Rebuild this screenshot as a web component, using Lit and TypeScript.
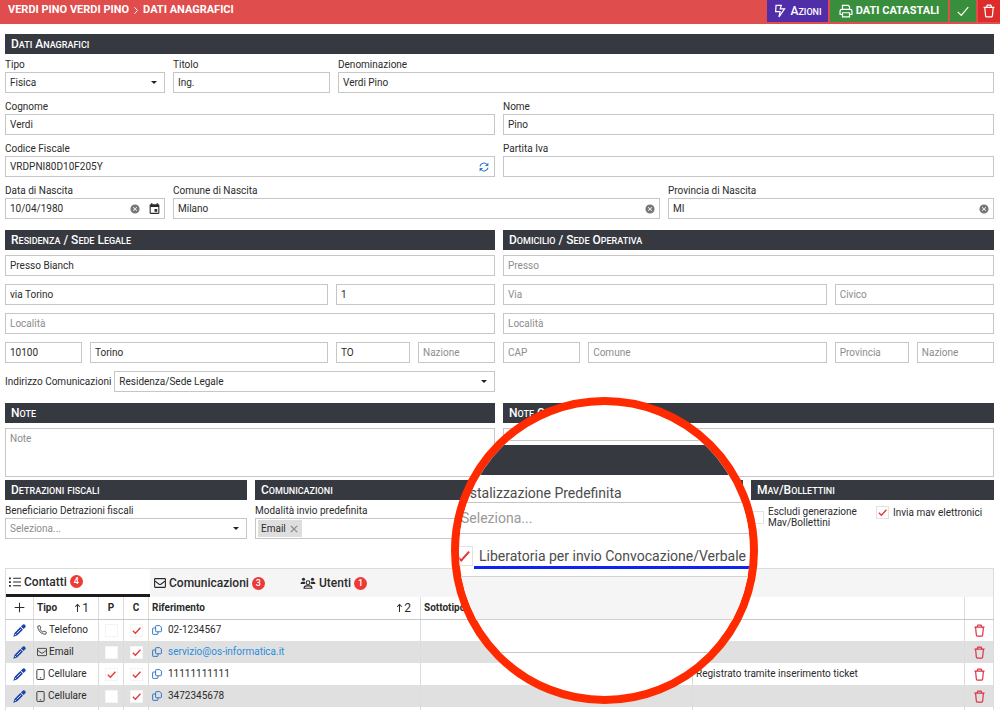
import { LitElement, html, css, svg, nothing, TemplateResult, SVGTemplateResult } from "lit";
import { customElement } from "lit/decorators.js";

type Contact = {
  icon: string;
  kind: string;
  preferred: boolean;
  comm: boolean;
  ref: string;
  link?: boolean;
  note?: string;
};

const CONTACTS: Contact[] = [
  { icon: "phone", kind: "Telefono", preferred: false, comm: true, ref: "02-1234567" },
  { icon: "mail", kind: "Email", preferred: false, comm: true, ref: "servizio@os-informatica.it", link: true },
  { icon: "mobile", kind: "Cellulare", preferred: true, comm: true, ref: "11111111111", note: "Registrato tramite inserimento ticket" },
  { icon: "mobile", kind: "Cellulare", preferred: false, comm: true, ref: "3472345678" },
];

/* Stroked glyphs on a 16 by 16 grid. */
const GLYPHS: Record<string, SVGTemplateResult> = {
  bolt: svg`<path d="M3.5 1.5h6L8.3 5.5h4.9L6.8 14.8l1.3-6H3z"/>`,
  print: svg`<path d="M4 6V1.5h6.5L12 3v3M3.5 12H1.2V8.3Q1.2 6.2 3.2 6.2h9.6q2 0 2 2.1V12h-2.3M4 10h8v4.8H4z"/>`,
  check: svg`<path d="M2 9l4 4L14 3.5"/>`,
  trash: svg`<path d="M1.8 3.8h12.4M5 3.6L6 1.3h4l1 2.3M3.2 4l.9 9.6q.1 1.2 1.2 1.2h5.4q1.1 0 1.2-1.2L12.8 4"/>`,
  chevron: svg`<path d="M5 1.5l6 6.5-6 6.5"/>`,
  refresh: svg`<path d="M1.5 7A6.6 6.6 0 0 1 13 4M14.5 9A6.6 6.6 0 0 1 3 12"/><path class="solid" d="M15 1v5.5H9.5zM1 15V9.500h5.500z"/>`,
  list: svg`<path d="M5.500 3H16M5.500 8H16M5.500 13H16"/><path class="solid" d="M0 2h2.500v2.200H0zM0 7h2.500v2.200H0zM0 12h2.500v2.200H0z"/>`,
  mail: svg`<path d="M1.6 2.200h12.800q.8 0 .8.800v10q0 .8-.8.8H1.600q-.8 0-.8-.8V3q0-.8.8-.8zM1 5.200l5.400 4.200q1.600 1.100 3.200 0L15 5.200"/>`,
  phone: svg`<path d="M4.500 1L1.200 2C1.200 9.200 6.800 14.800 14 14.800l1-3.300-3.800-1.800-1.600 1.900C7.500 10.500 5.500 8.500 4.400 6.400l1.900-1.600z"/>`,
  mobile: svg`<path d="M4 .8h8q1.300 0 1.300 1.300v11.800q0 1.300-1.300 1.300H4q-1.300 0-1.300-1.300V2.100Q2.700.8 4 .8z"/><path d="M7 12.800h2"/>`,
  pencil: svg`<path class="solid" d="M12.300.6q1-.8 2 .1l1 1q.9 1 .1 2L13 6.200 9.800 3zM9 3.800L12.200 7 5 14.200.4 15.600 1.800 11z"/><path class="cut" d="M4.500 11.500l5.200-5.200M2.300 12.200l1.500 1.500"/>`,
  copy: svg`<path d="M6.800 1h5.700L15 3.500v6.300q0 1-1 1H6.800q-1 0-1-1V2q0-1 1-1zM5.500 4.800H2q-1 0-1 1V14q0 1 1 1h6.500q1 0 1-1v-2.800"/>`,
  plus: svg`<path d="M8 1v14M1 8h14"/>`,
  close: svg`<path d="M3 3l10 10M13 3L3 13"/>`,
  up: svg`<path d="M8 15V2M4 5.800L8 1.800l4 4"/>`,
  users: svg`<circle cx="8" cy="7.500" r="2.500"/><path d="M2.800 15q0-3.200 3-3.200h4.400q3 0 3 3.200z"/><circle class="solid" cx="2" cy="3" r="2.100"/><circle class="solid" cx="14" cy="3" r="2.100"/><path class="solid" d="M-2 9.200q0-3 2.800-3h3.200L3.800 9.200zM18 9.200q0-3-2.800-3H12l.2 3z"/>`,
};

const icon = (name: string, extra = "") =>
  html`<svg class="icon ${extra}" viewBox="0 0 16 16" aria-hidden="true">${GLYPHS[name]}</svg>`;

const clearIcon = html`<svg class="clear" viewBox="0 0 24 24" aria-hidden="true"><path d="M12 1a11 11 0 1 0 0 22 11 11 0 0 0 0-22zm5 14.600L15.600 17 12 13.400 8.400 17 7 15.600l3.600-3.600L7 8.400 8.400 7l3.600 3.600L15.600 7 17 8.400 13.400 12z"/></svg>`;
const calendarIcon = html`<svg class="calendar" viewBox="0 0 24 24" aria-hidden="true"><path d="M19 4h-1V2h-2v2H8V2H6v2H5c-1.100 0-2 .9-2 2v14c0 1.100.9 2 2 2h14c1.100 0 2-.9 2-2V6c0-1.100-.9-2-2-2zm0 16H5V9h14v11zM12 13h5v5h-5z"/></svg>`;
const caret = html`<svg class="caret" viewBox="0 0 8 4" aria-hidden="true"><path d="M0 0h8L4 4z"/></svg>`;

/* Small capitals: every word is set small, its capital initial large. */
const caps = (text: string) =>
  text.split(/(\/|\s+)/).map((w) =>
    /^[A-Za-z]/.test(w) ? html`<span class="word ${/^[A-Z]/.test(w) ? "initial" : ""}">${w}</span>` : w
  );

@customElement("app-root")
export class AppRoot extends LitElement {
  static styles = css`
    :host {
      display: block;
      position: relative;
      font: 10px/12px Roboto, "Liberation Sans", sans-serif;
      color: #2b2b2b;
      background: #fff;
    }
    * { box-sizing: border-box; }
    input, select, textarea, button { font: inherit; color: inherit; margin: 0; }
    button { border: 0; padding: 0; background: none; }
    .icon { width: 11px; height: 11px; fill: none; stroke: currentColor; stroke-width: 1.5; flex: none; overflow: visible; }
    .solid { fill: currentColor; stroke: none; }
    .cut { stroke: #fff; stroke-width: 1; }
    .word { display: inline-block; font-size: 9px; text-transform: uppercase; }
    .initial::first-letter { font-size: 12px; }

    .top { display: flex; align-items: flex-start; height: 24px; background: #df4d4c; color: #fff; }
    .crumbs { flex: 1; display: flex; align-items: center; gap: 3px; height: 20px; margin: 0; padding-left: 8px; font-size: 11px; font-weight: 700; text-transform: uppercase; }
    .crumbs .icon { width: 8px; height: 11px; stroke-width: 2; }
    .actions { display: flex; gap: 2px; }
    .act { display: flex; align-items: center; justify-content: center; gap: 3px; height: 22px; font-size: 12px; font-weight: 500; }
    .act .icon { width: 14px; height: 14px; stroke-width: 1.4; }
    .act.violet { width: 61px; background: #512da8; }
    .act.green { background: #388e3c; }
    .act.wide { width: 118px; font-size: 11px; font-weight: 700; }
    .act.tick { width: 26px; }
    .act.red { width: 22px; background: #dd2c2c; }

    main { padding: 10px 6px 0 5px; }
    h2 { height: 20px; margin: 0; padding-left: 6px; background: #373941; color: #fff; font-size: 12px; line-height: 20px; font-weight: 500; white-space: nowrap; overflow: hidden; }
    .labelled { display: grid; gap: 4px; padding-top: 1px; }
    .row { display: grid; gap: 8px; }
    .halves { grid-template-columns: minmax(0, 490fr) minmax(0, 491fr); }
    .r-top { grid-template-columns: 160fr 157fr 656fr; }
    .r-birth { grid-template-columns: 160fr 487fr 326fr; }
    .r-street { grid-template-columns: 323fr 159fr; }
    .r-city { grid-template-columns: 77fr 238fr 74fr 77fr; }
    .r-bottom { grid-template-columns: 242fr 488fr 243fr; margin-top: 3px; }
    .inline { display: flex; align-items: center; gap: 3px; }
    .inline .box { flex: 1; }
    .part { margin-top: 11px; }
    .notes { margin-top: 11px; }

    .field { min-width: 0; }
    .field > label { display: block; height: 17px; line-height: 19px; white-space: nowrap; }
    .box { display: flex; align-items: center; min-width: 0; height: 21px; border: 1px solid #c6c6c6; background: #fff; }
    .box input, .box select { flex: 1; width: 100%; min-width: 0; height: 19px; padding: 0 4px; border: 0; outline: 0; background: none; appearance: none; }
    .box > svg { flex: none; }
    .box .hint, ::placeholder { color: #8d8d8d; opacity: 1; }
    .caret { width: 6px; height: 3px; margin-right: 7px; fill: #222; }
    .clear { width: 10px; height: 10px; margin-right: 4px; fill: #777; }
    .calendar { width: 13px; height: 13px; margin: 0 3px 0 4px; fill: #2b2b2b; }
    .box .refresh { width: 10px; height: 10px; margin-right: 5px; color: #2a7ac8; stroke-width: 1.8; }
    textarea { display: block; width: 100%; height: 49px; margin-top: 5px; padding: 4px; border: 1px solid #c6c6c6; resize: none; outline: 0; }
    .stack { display: grid; gap: 8px; padding-top: 5px; }
    .tag { display: flex; align-items: center; gap: 3px; height: 17px; margin-left: 2px; padding: 0 3px; background: #dedede; }
    .tag button { display: flex; }
    .tag .icon { width: 10px; height: 10px; color: #888; stroke-width: 2; }

    .tickbox { flex: none; appearance: none; width: 13px; height: 13px; margin: 0; border: 1px solid #e2e2e2; background: #fff center / 9px 9px no-repeat; }
    .tickbox:checked { background-image: url("data:image/svg+xml,%3Csvg xmlns='http://www.w3.org/2000/svg' viewBox='0 0 16 16'%3E%3Cpath d='M1.500 8.500l4.500 4.500L15 3' fill='none' stroke='%23e53935' stroke-width='2.400'/%3E%3C/svg%3E"); }
    .ticks { display: grid; grid-template-columns: 125fr 118fr; align-items: start; padding-top: 6px; line-height: 11px; }
    .ticks label { display: flex; align-items: center; gap: 4px; }

    .tabs { display: flex; height: 29px; margin-top: 29px; border: 1px solid #dcdcdc; border-bottom: 0; background: #f5f5f5; }
    .tab { display: flex; align-items: center; gap: 3px; width: 146px; padding: 0 4px; font-size: 12px; font-weight: 500; }
    .tab.active { width: 144px; padding: 0 3px; border-bottom: 3px solid #1c1c1c; background: #fff; }
    .tab .icon { width: 12px; height: 12px; }
    .tab .users { margin: 0 2px; }
    .badge { min-width: 13px; height: 13px; border-radius: 7px; background: #ee3a36; color: #fff; font-size: 9px; line-height: 13px; text-align: center; }

    table { width: 100%; table-layout: fixed; border-collapse: collapse; }
    th, td { height: 22px; padding: 0 3px; text-align: left; border-left: 1px solid #dcdcdc; border-right: 1px solid #dcdcdc; white-space: nowrap; }
    th { border-bottom: 1px solid #c8c8c8; font-weight: 700; }
    .c-icon { width: 28px; }
    .c-kind { width: 65px; }
    .c-flag { width: 25px; }
    .c-del { width: 29px; }
    tbody tr.even { background: #e0e0e0; }
    tfoot td { height: 3px; }
    .center { text-align: center; padding: 0; }
    .cell { display: flex; align-items: center; gap: 2px; }
    .ref { gap: 6px; }
    .between { justify-content: space-between; }
    .center .cell { justify-content: center; }
    .cell button { display: flex; }
    .sort { display: flex; align-items: center; font-size: 12px; font-weight: 400; padding-right: 6px; }
    .sort .icon { width: 9px; height: 10px; stroke-width: 1.800; }
    .cell .copy { width: 10px; height: 10px; color: #2a70c0; }
    .cell .pencil { width: 13px; height: 13px; color: #1a44a8; }
    .cell .bin { width: 13px; height: 13px; color: #dc3545; }
    .cell .kind { width: 10px; height: 10px; stroke-width: 1.300; }
    .cell .mobile { width: 11px; height: 11px; margin: 0 -2px; }
    .cell .mobile + span { padding-left: 2px; }
    td .tickbox { border-color: #f4f4f4; }
    a { color: #2b8ddb; text-decoration: none; }

    /* Magnifier floating over the form */
    .lens { position: absolute; left: 451px; top: 397px; width: 307px; height: 307px; border: 8px solid #ff2a00; border-radius: 50%; overflow: hidden; background: #fff; color: #4c4c4c; font-size: 14px; line-height: 18px; }
    .zoomed { margin: 0 -6px; }
    .z-area { height: 36px; border-bottom: 1px solid #c6c6c6; }
    .z-bar { height: 30px; margin-top: 4px; background: #373941; }
    .z-label { display: block; height: 27px; padding-top: 9px; white-space: nowrap; }
    .z-select { display: flex; width: 100%; height: 32px; padding: 0 7px; appearance: none; border: 1px solid #c6c6c6; background: #fff; color: #999; opacity: 1; }
    .z-check { display: flex; align-items: center; gap: 1px; height: 20px; margin-top: 12px; white-space: nowrap; }
    .z-check .tickbox { width: 20px; height: 20px; background-size: 14px 14px; }
    .z-text { height: 23px; margin-top: 3px; padding: 0 4px 0 5px; border-bottom: 3px solid #1024f0; line-height: 21px; }
    .z-tabs { height: 44px; margin-top: 10px; border: solid #d2d2d2; border-width: 1px 0; background: #f5f5f5; }
    .z-head { height: 33px; border-bottom: 1px solid #c6c6c6; }
  `;

  private box(id: string, name: string, value: string, after: unknown = nothing) {
    return html`<div class="box"><input id=${id} type="text" aria-label=${name} placeholder=${value ? "" : name} .value=${value} />${after}</div>`;
  }

  private field(id: string, label: string, value: string, after: unknown = nothing) {
    return html`<div class="field"><label for=${id}>${label}</label>
      <div class="box"><input id=${id} type="text" .value=${value} />${after}</div></div>`;
  }

  private select(id: string, value: string, hint = false) {
    return html`<div class="box"><select id=${id} class=${hint ? "hint" : ""}><option>${value}</option></select>${caret}</div>`;
  }

  private address(prefix: string, v: string[]): TemplateResult {
    return html`
      ${this.box(prefix + "-presso", "Presso", v[0])}
      <div class="row r-street">${this.box(prefix + "-via", "Via", v[1])}${this.box(prefix + "-civico", "Civico", v[2])}</div>
      ${this.box(prefix + "-localita", "Località", "")}
      <div class="row r-city">
        ${this.box(prefix + "-cap", "CAP", v[3])}${this.box(prefix + "-comune", "Comune", v[4])}
        ${this.box(prefix + "-provincia", "Provincia", v[5])}${this.box(prefix + "-nazione", "Nazione", "")}
      </div>`;
  }

  private contactRow(c: Contact, i: number) {
    return html`<tr class=${i % 2 ? "even" : ""}>
      <td class="center"><div class="cell"><button aria-label="Modifica">${icon("pencil", "pencil")}</button></div></td>
      <td><div class="cell">${icon(c.icon, "kind " + c.icon)}<span>${c.kind}</span></div></td>
      <td class="center"><div class="cell"><input class="tickbox" type="checkbox" aria-label="P" .checked=${c.preferred} /></div></td>
      <td class="center"><div class="cell"><input class="tickbox" type="checkbox" aria-label="C" .checked=${c.comm} /></div></td>
      <td><div class="cell ref"><button aria-label="Copia">${icon("copy", "copy")}</button>${c.link ? html`<a href="mailto:${c.ref}">${c.ref}</a>` : html`<span>${c.ref}</span>`}</div></td>
      <td></td>
      <td>${c.note ?? nothing}</td>
      <td class="center"><div class="cell"><button aria-label="Elimina">${icon("trash", "bin")}</button></div></td>
    </tr>`;
  }

  render() {
    return html`
      <header class="top">
        <h1 class="crumbs"><span>Verdi Pino Verdi Pino</span>${icon("chevron")}<span>Dati Anagrafici</span></h1>
        <div class="actions">
          <button class="act violet">${icon("bolt")}<span>${caps("Azioni")}</span></button>
          <button class="act green wide">${icon("print")}<span>DATI CATASTALI</span></button>
          <button class="act green tick" aria-label="Conferma">${icon("check")}</button>
          <button class="act red" aria-label="Elimina">${icon("trash")}</button>
        </div>
      </header>
      <main>
        <section>
          <h2>${caps("Dati Anagrafici")}</h2>
          <div class="labelled">
            <div class="row r-top">
              <div class="field"><label for="tipo">Tipo</label>${this.select("tipo", "Fisica")}</div>
              ${this.field("titolo", "Titolo", "Ing.")}
              ${this.field("denominazione", "Denominazione", "Verdi Pino")}
            </div>
            <div class="row halves">${this.field("cognome", "Cognome", "Verdi")}${this.field("nome", "Nome", "Pino")}</div>
            <div class="row halves">
              ${this.field("cf", "Codice Fiscale", "VRDPNI80D10F205Y", icon("refresh", "refresh"))}
              ${this.field("piva", "Partita Iva", "")}
            </div>
            <div class="row r-birth">
              ${this.field("nascita", "Data di Nascita", "10/04/1980", html`${clearIcon}${calendarIcon}`)}
              ${this.field("comune-n", "Comune di Nascita", "Milano", clearIcon)}
              ${this.field("prov-n", "Provincia di Nascita", "MI", clearIcon)}
            </div>
          </div>
        </section>

        <div class="row halves part">
          <section>
            <h2>${caps("Residenza / Sede Legale")}</h2>
            <div class="stack">
              ${this.address("res", ["Presso Bianch", "via Torino", "1", "10100", "Torino", "TO"])}
              <div class="inline"><label for="indirizzo">Indirizzo Comunicazioni</label>${this.select("indirizzo", "Residenza/Sede Legale")}</div>
            </div>
          </section>
          <section>
            <h2>${caps("Domicilio / Sede Operativa")}</h2>
            <div class="stack">${this.address("dom", ["", "", "", "", "", ""])}</div>
          </section>
        </div>

        <div class="row halves notes">
          <section><h2>${caps("Note")}</h2><textarea aria-label="Note" placeholder="Note"></textarea></section>
          <section><h2>${caps("Note Contabili")}</h2><textarea aria-label="Note Contabili"></textarea></section>
        </div>

        <div class="row r-bottom">
          <section>
            <h2>${caps("Detrazioni fiscali")}</h2>
            <div class="labelled"><div class="field"><label for="benef">Beneficiario Detrazioni fiscali</label>${this.select("benef", "Seleziona...", true)}</div></div>
          </section>
          <section>
            <h2>${caps("Comunicazioni")}</h2>
            <div class="labelled"><div class="field"><label for="invio">Modalità invio predefinita</label>
              <div class="box"><span class="tag">Email<button aria-label="Rimuovi Email">${icon("close")}</button></span><input id="invio" type="text" /></div>
            </div></div>
          </section>
          <section>
            <h2>${caps("Mav/Bollettini")}</h2>
            <div class="ticks">
              <label><input class="tickbox" type="checkbox" /><span>Escludi generazione Mav/Bollettini</span></label>
              <label><input class="tickbox" type="checkbox" .checked=${true} /><span>Invia mav elettronici</span></label>
            </div>
          </section>
        </div>

        <nav class="tabs" aria-label="Schede">
          <button class="tab active">${icon("list")}<span>Contatti</span><span class="badge">4</span></button>
          <button class="tab">${icon("mail")}<span>Comunicazioni</span><span class="badge">3</span></button>
          <button class="tab">${icon("users", "users")}<span>Utenti</span><span class="badge">1</span></button>
        </nav>
        <table>
          <colgroup><col class="c-icon" /><col class="c-kind" /><col class="c-flag" /><col class="c-flag" /><col /><col /><col /><col class="c-del" /></colgroup>
          <thead><tr>
            <th class="center"><div class="cell"><button aria-label="Aggiungi">${icon("plus")}</button></div></th>
            <th><div class="cell between"><span>Tipo</span><span class="sort">${icon("up")}1</span></div></th>
            <th class="center">P</th>
            <th class="center">C</th>
            <th><div class="cell between"><span>Riferimento</span><span class="sort">${icon("up")}2</span></div></th>
            <th>Sottotipo</th>
            <th>Note</th>
            <th></th>
          </tr></thead>
          <tbody>${CONTACTS.map((c, i) => this.contactRow(c, i))}</tbody>
          <tfoot><tr>${Array.from({ length: 8 }, () => html`<td></td>`)}</tr></tfoot>
        </table>
      </main>

      <aside class="lens" aria-label="Dettaglio ingrandito">
        <div class="zoomed">
          <div class="z-area"></div>
          <div class="z-bar"></div>
          <label class="z-label" for="post">Postalizzazione Predefinita</label>
          <select id="post" class="z-select"><option>Seleziona...</option></select>
          <label class="z-check"><input class="tickbox" type="checkbox" .checked=${true} /><span class="z-text">Liberatoria per invio Convocazione/Verbale</span></label>
          <div class="z-tabs"></div>
          <div class="z-head"></div>
        </div>
      </aside>`;
  }
}
